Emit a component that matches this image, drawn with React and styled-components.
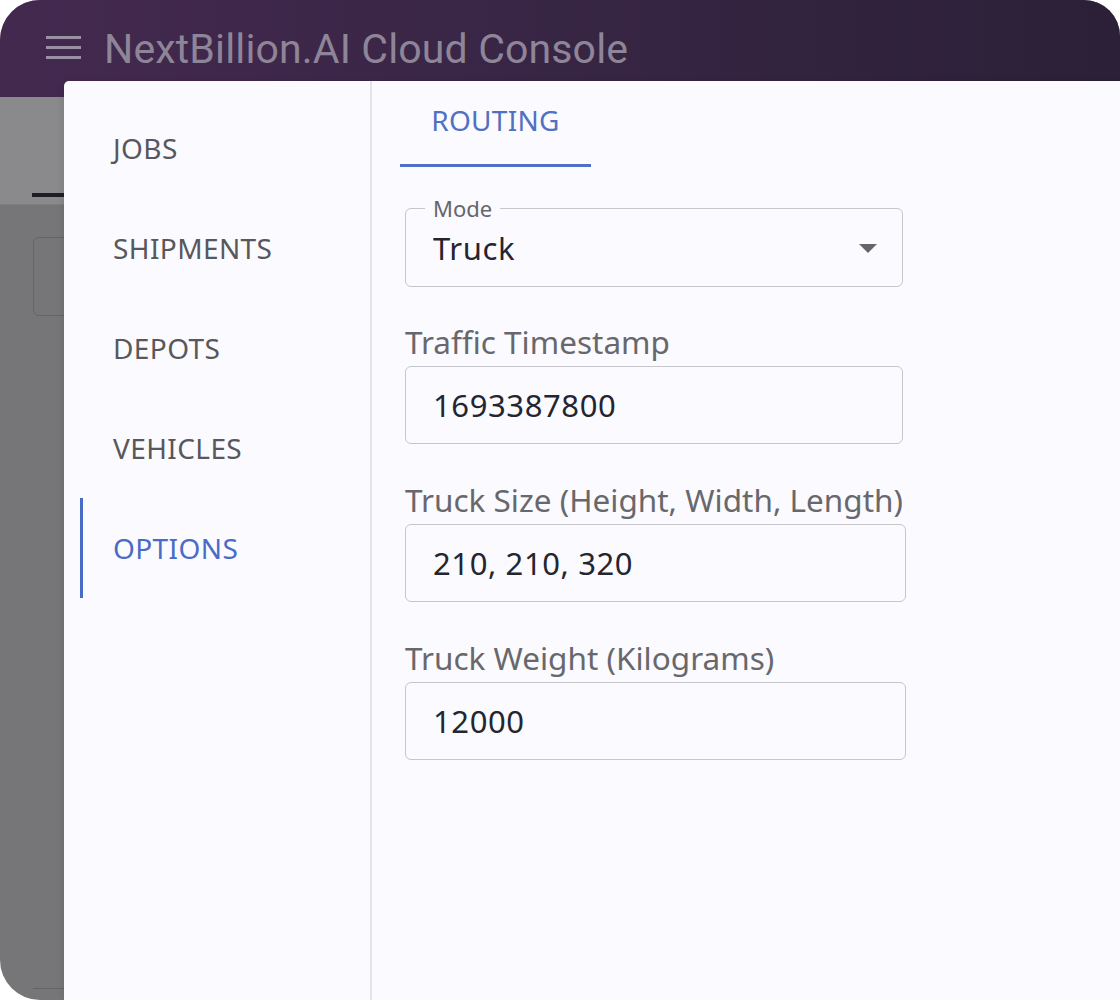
import React from "react";
import styled, { createGlobalStyle } from "styled-components";

const GlobalStyle = createGlobalStyle`
  html, body {
    margin: 0;
    padding: 0;
    background: #ffffff;
  }
  body {
    font-family: "Noto Sans", "Open Sans", sans-serif;
  }
`;

const Window = styled.div`
  position: relative;
  width: 1120px;
  height: 1000px;
  border-radius: 40px 36px 0 40px;
  overflow: hidden;
  background: #767678;
  display: flex;
  flex-direction: column;
`;

const AppBar = styled.header`
  height: 97px;
  flex-shrink: 0;
  display: flex;
  align-items: center;
  gap: 23px;
  padding: 0 0 0 46px;
  box-sizing: border-box;
  background: linear-gradient(90deg, #44294f 0%, #3a2647 40%, #2b2037 100%);
`;

const Burger = styled.div`
  width: 35px;
  display: flex;
  flex-direction: column;
  gap: 7px;
  margin-top: -2px;

  span {
    display: block;
    height: 3px;
    background: #9a90a4;
  }
`;

const Title = styled.h1`
  margin: 0;
  font-family: Roboto, "Noto Sans", sans-serif;
  font-size: 41px;
  font-weight: 400;
  color: #8e8598;
  letter-spacing: 0.15px;
`;

const PageTabs = styled.div`
  height: 108px;
  flex-shrink: 0;
  background: #8a8a8c;
  border-bottom: 1px solid #7e7e80;
  display: flex;
  align-items: flex-end;
  padding-left: 32px;
  box-sizing: border-box;
`;

const PageTabIndicator = styled.div`
  width: 60px;
  height: 4px;
  margin-bottom: 7px;
  background: #1e1d26;
`;

const PageBody = styled.div`
  flex: 1;
  padding: 32px 0 0 33px;
  display: flex;
  flex-direction: column;
  justify-content: space-between;
`;

const PageInput = styled.div`
  width: 80px;
  height: 79px;
  border: 1.5px solid #656567;
  border-radius: 6px;
  box-sizing: border-box;
`;

const PageFooterLine = styled.div`
  width: 60px;
  height: 1px;
  margin-bottom: 11px;
  background: #636365;
`;

const Drawer = styled.aside`
  position: absolute;
  top: 81px;
  left: 64px;
  right: 0;
  bottom: 0;
  background: #fafaff;
  border-top-left-radius: 5px;
  display: grid;
  grid-template-columns: 308px 1fr;
  box-shadow: -2px 0 6px rgba(0, 0, 0, 0.08);
`;

const Nav = styled.nav`
  border-right: 2px solid #e4e4ea;
  padding-top: 17px;
  display: flex;
  flex-direction: column;
`;

const NavItem = styled.div`
  position: relative;
  height: 100px;
  display: flex;
  align-items: center;
  padding-left: 49px;
  font-size: 28px;
  letter-spacing: 0.4px;
  color: ${(p) => (p.$active ? "#4a6bc6" : "#58585c")};

  &::before {
    content: "";
    display: ${(p) => (p.$active ? "block" : "none")};
    position: absolute;
    left: 16px;
    top: 0;
    bottom: 0;
    width: 3px;
    background: #4a6bc6;
  }
`;

const Content = styled.section`
  display: flex;
  flex-direction: column;
`;

const Tabs = styled.div`
  padding-left: 28px;
  display: flex;
`;

const Tab = styled.div`
  width: 191px;
  height: 86px;
  box-sizing: border-box;
  display: flex;
  justify-content: center;
  padding-top: 20px;
  font-size: 28px;
  letter-spacing: 0.3px;
  color: #5270c2;
  border-bottom: 3px solid #4f70c6;
`;

const Form = styled.div`
  padding: 41px 0 0 33px;
  display: flex;
  flex-direction: column;
`;

const SelectBox = styled.div`
  position: relative;
  width: 498px;
  height: 79px;
  border: 1.5px solid #c6c6cc;
  border-radius: 6px;
  box-sizing: border-box;
  display: flex;
  align-items: center;
  justify-content: space-between;
  padding: 0 25px 0 27px;
  margin-bottom: 36px;
`;

const Legend = styled.span`
  position: absolute;
  top: -16px;
  left: 19px;
  padding: 0 8px;
  background: #fafaff;
  font-size: 22px;
  line-height: 30px;
  color: #66666a;
`;

const Caret = styled.span`
  width: 0;
  height: 0;
  border-left: 9px solid transparent;
  border-right: 9px solid transparent;
  border-top: 9px solid #66666a;
  margin-top: 2px;
`;

const Field = styled.div`
  display: flex;
  flex-direction: column;
  margin-bottom: 37px;
`;

const Label = styled.label`
  font-size: 31.5px;
  line-height: 38px;
  color: #68686c;
  margin-bottom: 5px;
  white-space: nowrap;
`;

const InputBox = styled.div`
  width: ${(p) => (p.$wide ? "501px" : "498px")};
  height: 78px;
  border: 1.5px solid #c6c6cc;
  border-radius: 6px;
  box-sizing: border-box;
  display: flex;
  align-items: center;
  padding-left: 27px;
`;

const Value = styled.span`
  font-size: 31px;
  color: #25252f;
  letter-spacing: 0.6px;
`;

const navItems = ["JOBS", "SHIPMENTS", "DEPOTS", "VEHICLES", "OPTIONS"];

const fields = [
  { label: "Traffic Timestamp", value: "1693387800" },
  { label: "Truck Size (Height, Width, Length)", value: "210, 210, 320", wide: true },
  { label: "Truck Weight (Kilograms)", value: "12000", wide: true },
];

const App = () => {
  return (
    <>
      <GlobalStyle />
      <Window>
        <AppBar>
          <Burger>
            <span />
            <span />
            <span />
          </Burger>
          <Title>NextBillion.AI Cloud Console</Title>
        </AppBar>
        <PageTabs>
          <PageTabIndicator />
        </PageTabs>
        <PageBody>
          <PageInput />
          <PageFooterLine />
        </PageBody>

        <Drawer>
          <Nav>
            {navItems.map((item) => (
              <NavItem key={item} $active={item === "OPTIONS"}>
                {item}
              </NavItem>
            ))}
          </Nav>
          <Content>
            <Tabs>
              <Tab>ROUTING</Tab>
            </Tabs>
            <Form>
              <SelectBox>
                <Legend>Mode</Legend>
                <Value>Truck</Value>
                <Caret />
              </SelectBox>
              {fields.map((f) => (
                <Field key={f.label}>
                  <Label>{f.label}</Label>
                  <InputBox $wide={f.wide}>
                    <Value>{f.value}</Value>
                  </InputBox>
                </Field>
              ))}
            </Form>
          </Content>
        </Drawer>
      </Window>
    </>
  );
};

export default App;
